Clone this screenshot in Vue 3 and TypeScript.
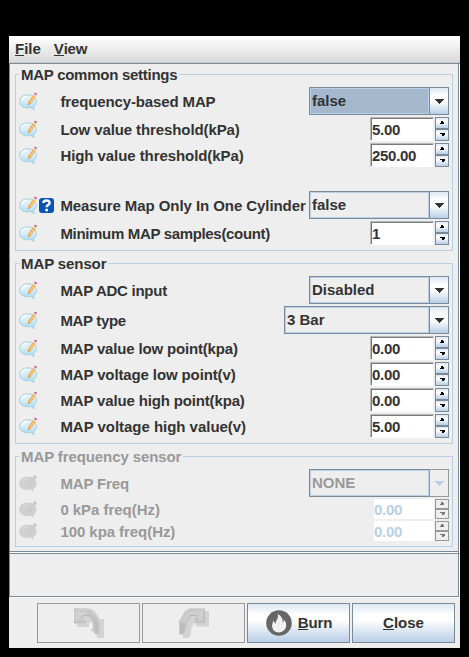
<script setup lang="ts">
type Kind = 'combo' | 'spin'
interface Row {
  label?: string
  tracking?: number
  kind?: Kind
  value?: string
  wide?: boolean
  focused?: boolean
  help?: boolean
}
interface Group {
  title: string
  tracking: number
  cls: string
  disabled?: boolean
  rows: Row[]
}

const groups: Group[] = [
  {
    title: 'MAP common settings',
    tracking: -0.27,
    cls: 'common',
    rows: [
      { label: 'frequency-based MAP', tracking: -0.13, kind: 'combo', value: 'false', focused: true },
      { label: 'Low value threshold(kPa)', tracking: -0.1, kind: 'spin', value: '5.00' },
      { label: 'High value threshold(kPa)', tracking: -0.07, kind: 'spin', value: '250.00' },
      {},
      { label: 'Measure Map Only In One Cylinder', tracking: -0.07, kind: 'combo', value: 'false', help: true },
      { label: 'Minimum MAP samples(count)', tracking: -0.33, kind: 'spin', value: '1' },
    ],
  },
  {
    title: 'MAP sensor',
    tracking: -0.1,
    cls: 'sensor',
    rows: [
      { label: 'MAP ADC input', tracking: -0.27, kind: 'combo', value: 'Disabled' },
      { label: 'MAP type', tracking: -0.33, kind: 'combo', value: '3 Bar', wide: true },
      { label: 'MAP value low point(kpa)', tracking: -0.17, kind: 'spin', value: '0.00' },
      { label: 'MAP voltage low point(v)', tracking: -0.12, kind: 'spin', value: '0.00' },
      { label: 'MAP value high point(kpa)', tracking: -0.15, kind: 'spin', value: '0.00' },
      { label: 'MAP voltage high value(v)', tracking: -0.03, kind: 'spin', value: '5.00' },
    ],
  },
  {
    title: 'MAP frequency sensor',
    tracking: -0.1,
    cls: 'freq',
    disabled: true,
    rows: [
      { label: 'MAP Freq', tracking: -0.15, kind: 'combo', value: 'NONE' },
      { label: '0 kPa freq(Hz)', tracking: -0.04, kind: 'spin', value: '0.00' },
      { label: '100 kpa freq(Hz)', tracking: -0.06, kind: 'spin', value: '0.00' },
    ],
  },
]
</script>

<template>
  <div class="screen">
    <svg class="defs" width="0" height="0">
      <defs>
        <linearGradient id="bubble" x1="0" y1="0" x2="0" y2="1">
          <stop offset="0" stop-color="#e6f2f7" />
          <stop offset="0.45" stop-color="#d6edf7" />
          <stop offset="1" stop-color="#a2daf3" />
        </linearGradient>
      </defs>
    </svg>
    <div class="window">
      <nav class="menubar">
        <span><u>F</u>ile</span>
        <span class="view"><u>V</u>iew</span>
      </nav>
      <main class="panel">
        <section v-for="g in groups" :key="g.title" class="group" :class="[g.cls, { disabled: g.disabled }]">
          <h2 class="legend"><span :style="{ letterSpacing: g.tracking + 'px' }">{{ g.title }}</span></h2>
          <div
            v-for="(r, i) in g.rows"
            :key="i"
            class="row"
            :class="[r.kind ?? 'blank']"
          >
            <template v-if="r.kind">
              <svg v-if="!g.disabled" class="note" width="18" height="18" viewBox="0 0 18 16.800" preserveAspectRatio="none">
                <path d="M8.400 2.600C3.800 2.600.6 5.400.6 8.800s3.200 5.900 7.600 5.900c1.500 0 2.600-.1 3.600-.4 1 1.300 2.200 1.800 3.500 1.900-.6-.8-.7-1.900-.4-3.100 1.400-1 2.400-2.400 2.400-4.300 0-3.500-4-6.200-8.900-6.200z" fill="url(#bubble)" stroke="#a6cddd" stroke-width=".9" />
                <path d="M2.800 7.600c.8-2.200 3-3.300 5.600-3.200" fill="none" stroke="#fff" stroke-width="1.100" />
                <path d="M8.900 12.300l.4-3.200 5-6.400 2.400 1.700-4.900 6.500z" fill="#f0a648" />
                <path d="M10.900 10l4.400-5.900" fill="none" stroke="#ffd79a" stroke-width="1" />
                <path d="M8.900 12.300l.2-1.100.8.600z" fill="#776" />
                <path d="M14.400 2.700l2.300 1.700.5-.7L15 2z" fill="#d5e2ec" />
                <path d="M15.100 1.700l.6-.9c.8-.6 2.400.6 2 1.500l-.6 1z" fill="#df4c68" />
              </svg>
              <svg v-else class="note" width="18" height="18" viewBox="0 0 18 16.800" preserveAspectRatio="none">
                <path d="M8.400 2.400C3.500 2.400.2 5.200.2 8.800s3.300 6.100 8 6.100c1.500 0 2.600-.1 3.600-.4 1 1.300 2.200 1.900 3.500 2-.6-.8-.7-1.900-.4-3.100 1.500-1 2.700-2.500 2.700-4.600 0-3.600-4.200-6.400-9.200-6.400z" fill="#d0d0d0" />
                <path d="M3 7c1.200-2 3.500-2.700 6-2.500" fill="none" stroke="#dadada" stroke-width="1.200" />
                <path d="M8.900 12.300l.4-3.200L15.600.8 18 2.500l-6.200 8.400z" fill="#c8c8c8" />
                <path d="M10.900 10l4.400-5.900" fill="none" stroke="#d2d2d2" stroke-width="1" />
              </svg>
              <span class="helpslot">
                <svg v-if="r.help" width="15" height="15" viewBox="0 0 15 15">
                  <rect width="15" height="15" rx="3" fill="#0a55b4" />
                  <path d="M4.400 5C4.500 1.800 10.600 1.600 10.600 4.900c0 2-2.900 1.900-2.900 4.300" fill="none" stroke="#fff" stroke-width="2.500" />
                  <circle cx="7.600" cy="12" r="1.500" fill="#fff" />
                </svg>
              </span>
              <label class="label" :style="{ letterSpacing: r.tracking + 'px' }">{{ r.label }}</label>
              <div v-if="r.kind === 'combo'" class="combobox" :class="{ wide: r.wide, focused: r.focused }">
                <span class="display">{{ r.value }}</span>
                <span class="drop">
                  <svg width="10" height="5" viewBox="0 0 10 5" shape-rendering="crispEdges"><path d="M0 0h10L5 5z" fill="currentColor" /></svg>
                </span>
              </div>
              <div v-else class="spinner">
                <span class="field">{{ r.value }}</span>
                <span class="steps">
                  <i><svg width="4" height="3" viewBox="0 0 4 3" shape-rendering="crispEdges"><path d="M1 0h2v1h1v2H0V2h1z" fill="currentColor" /></svg></i>
                  <i><svg width="5" height="3" viewBox="0 0 5 3" shape-rendering="crispEdges"><path d="M0 0h5v2H4v1H2V1H0z" fill="currentColor" /></svg></i>
                </span>
              </div>
            </template>
          </div>
        </section>
      </main>
      <div class="status"></div>
      <footer class="buttons">
        <button class="btn off" disabled>
          <svg width="30" height="30" viewBox="0 0 30 30">
            <path d="M0 0h14l5 1.500 3 3.500 4 6h4v19h-6l-4-5-3.500-2.500L19 20l1-5-3-2-2 3v3H3v-3H0z" fill="#d3d3d3" />
            <path d="M0 .5h3l2 1.500h6l5 0 5 4 3.500 5 1.500 6v9h-4l-2-4-3 .5 2-3-.5-4-2.500-5-4-3H8v4l4 2.500H0z" fill="#c7c7c7" />
            <path d="M1 3l4 1 5-1 5 2.500-6 1.500-1.500 4L1 12z" fill="#d0d0d0" />
            <path d="M0 14.500h11V12M8.500 11V7.500H17l3 4" fill="none" stroke="#bababa" />
            <path d="M20 9l3 4 1 7v5h-3v-8z" fill="#bcbcbc" />
          </svg>
        </button>
        <button class="btn off" disabled>
          <svg width="30" height="30" viewBox="0 0 30 30">
            <path d="M10 0h16v3h4v15.500H17v-3h-2l-2 3.500-1 3v4l-2 4H4v-3H0V12l3-2 3-6z" fill="#d3d3d3" />
            <path d="M11 1h15v14h-9v-4l-1-3h-4l-3 5-1 6-3 7H0V14l3-6 3-5z" fill="#c9c9c9" />
            <path d="M10 4l13-1v8h-5l-2-5-5 0-6 7-1-2z" fill="#d0d0d0" />
            <path d="M25.500 1v13H16.500v-3h2V7.500H12l-3.500 5" fill="none" stroke="#bababa" />
            <path d="M1 15h5v6l-2 5H1z" fill="#bcbcbc" />
          </svg>
        </button>
        <button class="btn burn">
          <svg width="26" height="26" viewBox="0 0 26 26">
            <circle cx="13" cy="13" r="12.800" fill="#666" />
            <path d="M11.600 3.700c4.100 2.400 5.600 5.700 5 9 1.100-.8 1.300-2 1-3.300 2.500 2.300 3.100 5.200 2.300 7.900-1 3.300-3.900 5.200-7 5.200-3.900 0-6.800-2.800-6.800-6.500 0-2.500 1-4.200 1.700-5.800.3 1.700.9 2.900 1.900 3.600-.4-3.200 3.600-5.600 1.900-10.100z" fill="#f2f2f2" />
            <path d="M13.200 11.500c.3 2.300-2.300 3.200-1.600 5.600" fill="none" stroke="#dcdcdc" stroke-width=".7" />
          </svg>
          <span><u>B</u>urn</span>
        </button>
        <button class="btn"><span><u>C</u>lose</span></button>
      </footer>
    </div>
  </div>
</template>

<style>
body {
  margin: 0;
  background: #000;
}
</style>

<style scoped>
* {
  box-sizing: border-box;
}
.screen {
  width: 469px;
  height: 657px;
  padding: 36px 9px 9px;
  background: #000;
  overflow: hidden;
  font: bold 15px/18px "Liberation Sans", Arial, sans-serif;
  color: #333;
}
.defs {
  position: absolute;
}
.window {
  width: 451px;
  height: 612px;
  display: flex;
  flex-direction: column;
  background: #eee;
}
.menubar {
  height: 27px;
  flex: none;
  display: flex;
  gap: 13px;
  padding: 4px 6px 0;
  background: linear-gradient(#fff, #dadada);
  border-bottom: 1px solid #ccc;
}
.view {
  letter-spacing: -0.25px;
}
u {
  text-decoration: none;
  display: inline-block;
  height: 16px;
  line-height: 18px;
  border-bottom: 1px solid #333;
}
.panel {
  height: 490px;
  flex: none;
  padding: 10px 5px 0;
  border: 1px solid #7a8a99;
  border-right: 0;
  border-bottom: 0;
  background: linear-gradient(#fff, #fff) bottom / 100% 1px no-repeat,
    linear-gradient(#7a8a99, #7a8a99) 0 487px / 100% 1px no-repeat;
  box-shadow: inset -1px 0 #fff, inset -2px 0 #7a8a99;
}
.status {
  height: 45px;
  flex: none;
  border: 1px solid #7a8a99;
  border-right-color: #fff;
  border-bottom-color: #fff;
  box-shadow: inset -1px -1px #7a8a99;
}
.group {
  width: 438px;
  border: 1px solid #b8cfe5;
  padding: 0 3px;
  display: flex;
  flex-direction: column;
  gap: 2px;
}
.common {
  height: 177px;
  margin-bottom: 12px;
}
.sensor {
  height: 181px;
  margin-bottom: 12px;
}
.freq {
  height: 91px;
}
.legend {
  height: 18px;
  margin: -9px 0 1px;
  font: inherit;
}
.legend span {
  display: inline-block;
  padding: 0 2px;
  background: #eee;
}
.row {
  display: flex;
  align-items: center;
  flex: none;
  height: 24px;
}
.row.combo {
  height: 28px;
}
.row.blank {
  height: 20px;
}
.note {
  width: 18px;
  height: 18px;
  flex: none;
}
.helpslot {
  width: 23px;
  height: 15px;
  padding-left: 2px;
  flex: none;
}
.helpslot svg {
  display: block;
}
.label {
  flex: 1;
  white-space: nowrap;
  padding: 1px 0 0 0.4px;
}
.combobox {
  width: 140px;
  height: 28px;
  flex: none;
  display: flex;
  border: 1px solid #7a8a99;
}
.combobox.wide {
  width: 165px;
}
.display {
  flex: 1;
  border: 1px solid #b8cfe5;
  padding: 3px 0 0 1px;
  line-height: 18px;
}
.focused .display {
  background: #a3b8cc;
}
.drop {
  width: 19px;
  border-left: 1px solid #7a8a99;
  background: linear-gradient(#dde8f3, #fff 30%, #fff 50%, #b8cfe5);
  display: flex;
  align-items: center;
  justify-content: center;
  padding-top: 1px;
}
.spinner {
  width: 79px;
  height: 24px;
  flex: none;
  display: flex;
  gap: 1px;
}
.field {
  width: 64px;
  border: 1px solid;
  border-color: #b8b8b8 #eee #fff #b8b8b8;
  box-shadow: inset 1px 1px #7a7a7a;
  background: #fff;
  padding: 3px 0 0 1px;
  line-height: 18px;
  letter-spacing: -0.3px;
}
.steps {
  width: 14px;
  display: flex;
  flex-direction: column;
}
.steps i {
  flex: 1;
  display: flex;
  align-items: center;
  justify-content: center;
  border: 1px solid #7a8a99;
  background: linear-gradient(#dde8f3, #fff 35%, #b8cfe5);
  color: #000;
  padding-bottom: 1px;
}
.disabled {
  color: #999;
}
.disabled .row.spin,
.disabled .spinner {
  height: 20px;
}
.disabled .spinner {
  width: 75px;
}
.disabled .field {
  width: 60px;
  border: 0;
  box-shadow: none;
  padding: 2px 0 0 0;
  color: #b8cfe5;
}
.disabled .steps i {
  background: #eee;
  border-color: #999;
  color: #777;
}
.disabled .drop {
  background: #eee;
  color: #b8cfe5;
  box-shadow: 1px 0 #999, 0 -1px #999, 0 1px #999;
  border-color: #999;
}
.buttons {
  display: flex;
  gap: 2px;
  padding: 5px 5px 0 28px;
}
.btn {
  width: 103px;
  height: 40px;
  flex: none;
  display: flex;
  align-items: center;
  justify-content: center;
  gap: 6px;
  padding: 0;
  border: 1px solid #7a8a99;
  border-radius: 0;
  background: linear-gradient(#dde8f3, #fff 30%, #fff 42%, #b8cfe5);
  font: inherit;
  color: #333;
}
.btn.off {
  background: #eee;
  border-color: #999;
}
.btn.burn {
  padding-left: 1px;
}
.burn span {
  letter-spacing: -0.1px;
}
</style>
